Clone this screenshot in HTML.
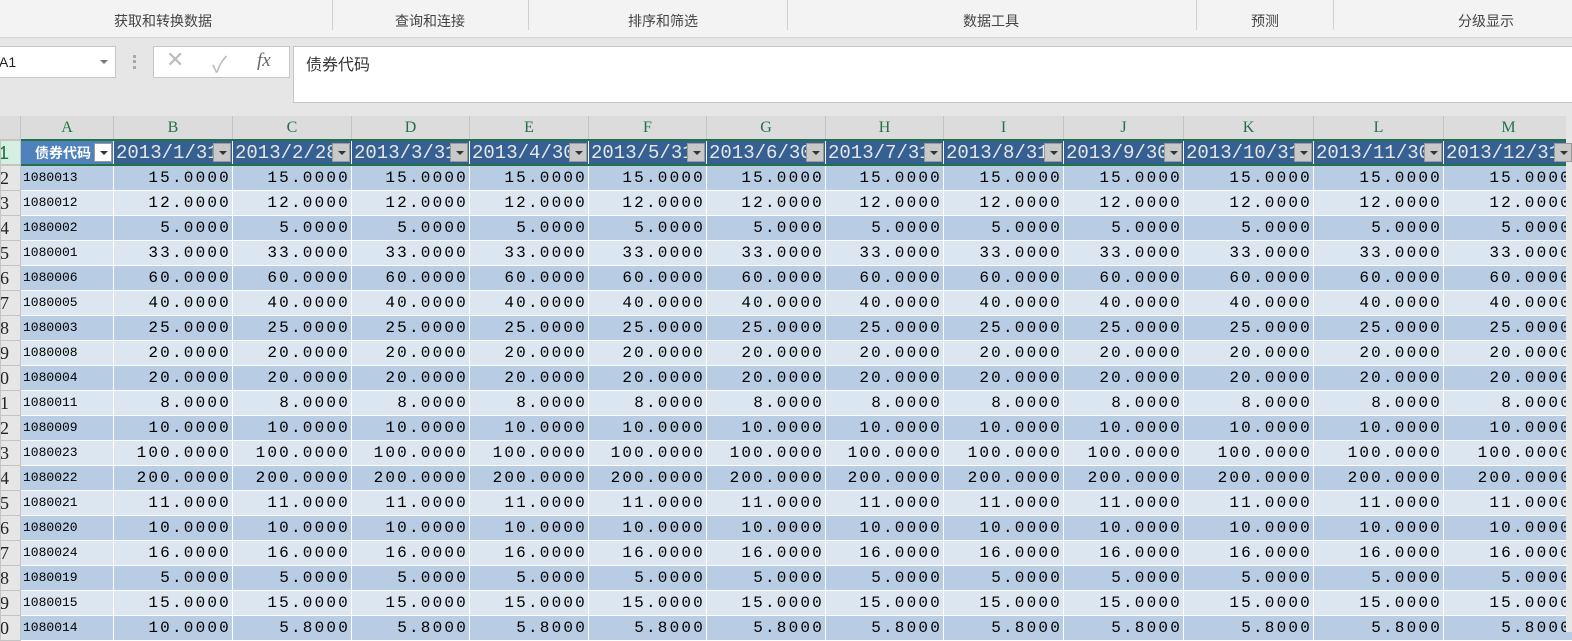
<!DOCTYPE html>
<html><head><meta charset="utf-8"><style>
*{margin:0;padding:0;box-sizing:border-box}
body{width:1572px;height:632px;overflow:hidden;background:#e6e6e6;font-family:"Liberation Sans","Noto Sans CJK SC",sans-serif;position:relative}
.rib{position:absolute;left:0;top:0;width:1572px;height:38px;background:#f3f3f3;border-bottom:1px solid #d4d4d4}
.lbl{position:absolute;top:11px;font-size:14px;color:#444;transform:translateX(-50%);white-space:nowrap}
.sep{position:absolute;top:0;width:1px;height:30px;background:#d0d0d0}
.box{position:absolute;background:#fff;border:1px solid #c6c6c6}
table{position:absolute;left:0;top:116px;border-collapse:collapse;table-layout:fixed;width:1573px}
td{height:25px;border:1px solid #fff;overflow:hidden;white-space:nowrap;padding:0 3px}
tr.h td{background:#dcdcdc;border:1px solid #c4c4c4;border-top:none;color:#217346;text-align:center;font-family:"Liberation Serif",serif;font-size:16px;height:24px}
td.rn{background:#e6e6e6;border:1px solid #c4c4c4;padding:0;position:relative;font-family:"Liberation Serif",serif;font-size:18px;color:#222}
td.rn span{position:absolute;right:11px;top:2px}
tr.t td{background:#366092;color:#e6e6e6;font-family:"Liberation Mono",monospace;font-size:19px;position:relative;border-color:#fff;border-top:2px solid #217346;border-bottom:2px solid #217346;padding:0 2px}
tr.t td.rn{background:#d3f0e0;color:#217346;border-color:#c4c4c4}
.dd{position:absolute;right:1px;top:2px;width:18px;height:19px;background:#c8c8c8;border:1px solid #999;z-index:2}
.dd:after{content:"";position:absolute;left:5px;top:7px;border:4px solid transparent;border-top:4px solid #333}
tr.d td{background:#b8cce4}tr.l td{background:#dce6f1}
tr.d td.rn,tr.l td.rn{background:#e6e6e6}
td.c{font-family:"Liberation Mono",monospace;font-size:13px;color:#000;padding-left:2px}
td.n{font-family:"Liberation Mono",monospace;font-size:16px;letter-spacing:2.2px;text-align:right;color:#000;padding-right:1px}
</style></head><body>
<div class="rib">
<div class="lbl" style="left:163px">获取和转换数据</div>
<div class="lbl" style="left:430px">查询和连接</div>
<div class="lbl" style="left:663px">排序和筛选</div>
<div class="lbl" style="left:991px">数据工具</div>
<div class="lbl" style="left:1265px">预测</div>
<div class="lbl" style="left:1486px">分级显示</div>
<div class="sep" style="left:332px"></div><div class="sep" style="left:528px"></div><div class="sep" style="left:787px"></div><div class="sep" style="left:1196px"></div><div class="sep" style="left:1333px"></div>
</div>
<div class="box" style="left:-2px;top:46px;width:118px;height:32px;font-size:14px;color:#222;padding:7px 0 0 0">A1<span style="position:absolute;right:7px;top:13px;border:4px solid transparent;border-top:4px solid #777"></span></div>
<div style="position:absolute;left:133px;top:55px;width:3px;height:14px;border-left:3px dotted #aaa"></div>
<div class="box" style="left:153px;top:46px;width:137px;height:32px;color:#bbb;font-size:22px">
<span style="position:absolute;left:12px;top:0px">✕</span><span style="position:absolute;left:58px;top:0px">✓</span><span style="position:absolute;left:103px;top:3px;font-family:'Liberation Serif',serif;font-style:italic;font-size:19px;color:#666">fx</span></div>
<div class="box" style="left:293px;top:46px;width:1290px;height:57px;font-size:16px;color:#333;padding:4px 0 0 12px">债券代码</div>
<div style="position:absolute;left:0;top:116px;width:20px;height:24px;background:#dcdcdc"><div style="position:absolute;right:2px;bottom:3px;border-left:16px solid transparent;border-bottom:16px solid #b4b4b4"></div></div>
<table>
<colgroup><col style="width:20px"><col style="width:93px"><col style="width:119px"><col style="width:119px"><col style="width:118px"><col style="width:119px"><col style="width:118px"><col style="width:119px"><col style="width:118px"><col style="width:120px"><col style="width:120px"><col style="width:130px"><col style="width:130px"><col style="width:130px"></colgroup>
<tr class="h"><td style="background:#dcdcdc;border:none"></td><td>A</td><td>B</td><td>C</td><td>D</td><td>E</td><td>F</td><td>G</td><td>H</td><td>I</td><td>J</td><td>K</td><td>L</td><td>M</td></tr>
<tr class="t"><td class="rn"><span>1</span></td><td style="background:#4f81bd;color:#fff;font-family:'Liberation Sans','Noto Sans CJK SC',sans-serif;font-size:14px;font-weight:bold;padding-left:14px">债券代码<span class="dd" style="background:#fff"></span></td><td>2013/1/31<span class="dd"></span></td><td>2013/2/28<span class="dd"></span></td><td>2013/3/31<span class="dd"></span></td><td>2013/4/30<span class="dd"></span></td><td>2013/5/31<span class="dd"></span></td><td>2013/6/30<span class="dd"></span></td><td>2013/7/31<span class="dd"></span></td><td>2013/8/31<span class="dd"></span></td><td>2013/9/30<span class="dd"></span></td><td>2013/10/31<span class="dd"></span></td><td>2013/11/30<span class="dd"></span></td><td>2013/12/31<span class="dd"></span></td></tr>
<tr class="d"><td class="rn"><span>2</span></td><td class="c">1080013</td><td class="n">15.0000</td><td class="n">15.0000</td><td class="n">15.0000</td><td class="n">15.0000</td><td class="n">15.0000</td><td class="n">15.0000</td><td class="n">15.0000</td><td class="n">15.0000</td><td class="n">15.0000</td><td class="n">15.0000</td><td class="n">15.0000</td><td class="n">15.0000</td></tr>
<tr class="l"><td class="rn"><span>3</span></td><td class="c">1080012</td><td class="n">12.0000</td><td class="n">12.0000</td><td class="n">12.0000</td><td class="n">12.0000</td><td class="n">12.0000</td><td class="n">12.0000</td><td class="n">12.0000</td><td class="n">12.0000</td><td class="n">12.0000</td><td class="n">12.0000</td><td class="n">12.0000</td><td class="n">12.0000</td></tr>
<tr class="d"><td class="rn"><span>4</span></td><td class="c">1080002</td><td class="n">5.0000</td><td class="n">5.0000</td><td class="n">5.0000</td><td class="n">5.0000</td><td class="n">5.0000</td><td class="n">5.0000</td><td class="n">5.0000</td><td class="n">5.0000</td><td class="n">5.0000</td><td class="n">5.0000</td><td class="n">5.0000</td><td class="n">5.0000</td></tr>
<tr class="l"><td class="rn"><span>5</span></td><td class="c">1080001</td><td class="n">33.0000</td><td class="n">33.0000</td><td class="n">33.0000</td><td class="n">33.0000</td><td class="n">33.0000</td><td class="n">33.0000</td><td class="n">33.0000</td><td class="n">33.0000</td><td class="n">33.0000</td><td class="n">33.0000</td><td class="n">33.0000</td><td class="n">33.0000</td></tr>
<tr class="d"><td class="rn"><span>6</span></td><td class="c">1080006</td><td class="n">60.0000</td><td class="n">60.0000</td><td class="n">60.0000</td><td class="n">60.0000</td><td class="n">60.0000</td><td class="n">60.0000</td><td class="n">60.0000</td><td class="n">60.0000</td><td class="n">60.0000</td><td class="n">60.0000</td><td class="n">60.0000</td><td class="n">60.0000</td></tr>
<tr class="l"><td class="rn"><span>7</span></td><td class="c">1080005</td><td class="n">40.0000</td><td class="n">40.0000</td><td class="n">40.0000</td><td class="n">40.0000</td><td class="n">40.0000</td><td class="n">40.0000</td><td class="n">40.0000</td><td class="n">40.0000</td><td class="n">40.0000</td><td class="n">40.0000</td><td class="n">40.0000</td><td class="n">40.0000</td></tr>
<tr class="d"><td class="rn"><span>8</span></td><td class="c">1080003</td><td class="n">25.0000</td><td class="n">25.0000</td><td class="n">25.0000</td><td class="n">25.0000</td><td class="n">25.0000</td><td class="n">25.0000</td><td class="n">25.0000</td><td class="n">25.0000</td><td class="n">25.0000</td><td class="n">25.0000</td><td class="n">25.0000</td><td class="n">25.0000</td></tr>
<tr class="l"><td class="rn"><span>9</span></td><td class="c">1080008</td><td class="n">20.0000</td><td class="n">20.0000</td><td class="n">20.0000</td><td class="n">20.0000</td><td class="n">20.0000</td><td class="n">20.0000</td><td class="n">20.0000</td><td class="n">20.0000</td><td class="n">20.0000</td><td class="n">20.0000</td><td class="n">20.0000</td><td class="n">20.0000</td></tr>
<tr class="d"><td class="rn"><span>10</span></td><td class="c">1080004</td><td class="n">20.0000</td><td class="n">20.0000</td><td class="n">20.0000</td><td class="n">20.0000</td><td class="n">20.0000</td><td class="n">20.0000</td><td class="n">20.0000</td><td class="n">20.0000</td><td class="n">20.0000</td><td class="n">20.0000</td><td class="n">20.0000</td><td class="n">20.0000</td></tr>
<tr class="l"><td class="rn"><span>11</span></td><td class="c">1080011</td><td class="n">8.0000</td><td class="n">8.0000</td><td class="n">8.0000</td><td class="n">8.0000</td><td class="n">8.0000</td><td class="n">8.0000</td><td class="n">8.0000</td><td class="n">8.0000</td><td class="n">8.0000</td><td class="n">8.0000</td><td class="n">8.0000</td><td class="n">8.0000</td></tr>
<tr class="d"><td class="rn"><span>12</span></td><td class="c">1080009</td><td class="n">10.0000</td><td class="n">10.0000</td><td class="n">10.0000</td><td class="n">10.0000</td><td class="n">10.0000</td><td class="n">10.0000</td><td class="n">10.0000</td><td class="n">10.0000</td><td class="n">10.0000</td><td class="n">10.0000</td><td class="n">10.0000</td><td class="n">10.0000</td></tr>
<tr class="l"><td class="rn"><span>13</span></td><td class="c">1080023</td><td class="n">100.0000</td><td class="n">100.0000</td><td class="n">100.0000</td><td class="n">100.0000</td><td class="n">100.0000</td><td class="n">100.0000</td><td class="n">100.0000</td><td class="n">100.0000</td><td class="n">100.0000</td><td class="n">100.0000</td><td class="n">100.0000</td><td class="n">100.0000</td></tr>
<tr class="d"><td class="rn"><span>14</span></td><td class="c">1080022</td><td class="n">200.0000</td><td class="n">200.0000</td><td class="n">200.0000</td><td class="n">200.0000</td><td class="n">200.0000</td><td class="n">200.0000</td><td class="n">200.0000</td><td class="n">200.0000</td><td class="n">200.0000</td><td class="n">200.0000</td><td class="n">200.0000</td><td class="n">200.0000</td></tr>
<tr class="l"><td class="rn"><span>15</span></td><td class="c">1080021</td><td class="n">11.0000</td><td class="n">11.0000</td><td class="n">11.0000</td><td class="n">11.0000</td><td class="n">11.0000</td><td class="n">11.0000</td><td class="n">11.0000</td><td class="n">11.0000</td><td class="n">11.0000</td><td class="n">11.0000</td><td class="n">11.0000</td><td class="n">11.0000</td></tr>
<tr class="d"><td class="rn"><span>16</span></td><td class="c">1080020</td><td class="n">10.0000</td><td class="n">10.0000</td><td class="n">10.0000</td><td class="n">10.0000</td><td class="n">10.0000</td><td class="n">10.0000</td><td class="n">10.0000</td><td class="n">10.0000</td><td class="n">10.0000</td><td class="n">10.0000</td><td class="n">10.0000</td><td class="n">10.0000</td></tr>
<tr class="l"><td class="rn"><span>17</span></td><td class="c">1080024</td><td class="n">16.0000</td><td class="n">16.0000</td><td class="n">16.0000</td><td class="n">16.0000</td><td class="n">16.0000</td><td class="n">16.0000</td><td class="n">16.0000</td><td class="n">16.0000</td><td class="n">16.0000</td><td class="n">16.0000</td><td class="n">16.0000</td><td class="n">16.0000</td></tr>
<tr class="d"><td class="rn"><span>18</span></td><td class="c">1080019</td><td class="n">5.0000</td><td class="n">5.0000</td><td class="n">5.0000</td><td class="n">5.0000</td><td class="n">5.0000</td><td class="n">5.0000</td><td class="n">5.0000</td><td class="n">5.0000</td><td class="n">5.0000</td><td class="n">5.0000</td><td class="n">5.0000</td><td class="n">5.0000</td></tr>
<tr class="l"><td class="rn"><span>19</span></td><td class="c">1080015</td><td class="n">15.0000</td><td class="n">15.0000</td><td class="n">15.0000</td><td class="n">15.0000</td><td class="n">15.0000</td><td class="n">15.0000</td><td class="n">15.0000</td><td class="n">15.0000</td><td class="n">15.0000</td><td class="n">15.0000</td><td class="n">15.0000</td><td class="n">15.0000</td></tr>
<tr class="d"><td class="rn"><span>20</span></td><td class="c">1080014</td><td class="n">10.0000</td><td class="n">5.8000</td><td class="n">5.8000</td><td class="n">5.8000</td><td class="n">5.8000</td><td class="n">5.8000</td><td class="n">5.8000</td><td class="n">5.8000</td><td class="n">5.8000</td><td class="n">5.8000</td><td class="n">5.8000</td><td class="n">5.8000</td></tr>
</table>
<div style="position:absolute;left:1566px;top:116px;width:6px;height:516px;background:#e6e6e6"></div>
</body></html>
